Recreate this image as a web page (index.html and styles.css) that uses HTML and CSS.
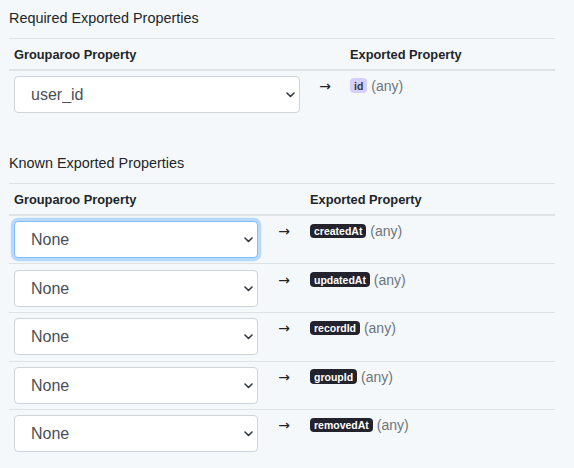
FILE: index.html
```html
<!DOCTYPE html>
<html lang="en">
<head>
<meta charset="utf-8">
<title>Exported Properties</title>
<link rel="stylesheet" href="styles.css">
</head>
<body>
<div class="page">
  <section class="block">
    <h2 class="block-title">Required Exported Properties</h2>
    <table class="map-table">
      <colgroup>
        <col class="col-select-wide">
        <col class="col-arrow-a">
        <col>
      </colgroup>
      <thead>
        <tr><th>Grouparoo Property</th><th></th><th>Exported Property</th></tr>
      </thead>
      <tbody>
        <tr>
          <td>
            <div class="select-wrap">
              <select class="select"><option>user_id</option></select>
              <svg class="chevron" width="9" height="6" viewBox="0 0 9 6"><path d="M1 1l3.5 3.5L8 1" fill="none" stroke="#343a40" stroke-width="1.6" stroke-linecap="round" stroke-linejoin="round"/></svg>
            </div>
          </td>
          <td class="arrow">→</td>
          <td class="prop"><span class="badge badge-light">id</span> <span class="type">(any)</span></td>
        </tr>
      </tbody>
    </table>
  </section>

  <section class="block">
    <h2 class="block-title">Known Exported Properties</h2>
    <table class="map-table">
      <colgroup>
        <col class="col-select-narrow">
        <col class="col-arrow-b">
        <col>
      </colgroup>
      <thead>
        <tr><th>Grouparoo Property</th><th></th><th>Exported Property</th></tr>
      </thead>
      <tbody>
        <tr>
          <td>
            <div class="select-wrap">
              <select class="select is-focused"><option>None</option></select>
              <svg class="chevron" width="9" height="6" viewBox="0 0 9 6"><path d="M1 1l3.5 3.5L8 1" fill="none" stroke="#343a40" stroke-width="1.6" stroke-linecap="round" stroke-linejoin="round"/></svg>
            </div>
          </td>
          <td class="arrow">→</td>
          <td class="prop"><span class="badge badge-dark">createdAt</span> <span class="type">(any)</span></td>
        </tr>
        <tr>
          <td>
            <div class="select-wrap">
              <select class="select"><option>None</option></select>
              <svg class="chevron" width="9" height="6" viewBox="0 0 9 6"><path d="M1 1l3.5 3.5L8 1" fill="none" stroke="#343a40" stroke-width="1.6" stroke-linecap="round" stroke-linejoin="round"/></svg>
            </div>
          </td>
          <td class="arrow">→</td>
          <td class="prop"><span class="badge badge-dark">updatedAt</span> <span class="type">(any)</span></td>
        </tr>
        <tr>
          <td>
            <div class="select-wrap">
              <select class="select"><option>None</option></select>
              <svg class="chevron" width="9" height="6" viewBox="0 0 9 6"><path d="M1 1l3.5 3.5L8 1" fill="none" stroke="#343a40" stroke-width="1.6" stroke-linecap="round" stroke-linejoin="round"/></svg>
            </div>
          </td>
          <td class="arrow">→</td>
          <td class="prop"><span class="badge badge-dark">recordId</span> <span class="type">(any)</span></td>
        </tr>
        <tr>
          <td>
            <div class="select-wrap">
              <select class="select"><option>None</option></select>
              <svg class="chevron" width="9" height="6" viewBox="0 0 9 6"><path d="M1 1l3.5 3.5L8 1" fill="none" stroke="#343a40" stroke-width="1.6" stroke-linecap="round" stroke-linejoin="round"/></svg>
            </div>
          </td>
          <td class="arrow">→</td>
          <td class="prop"><span class="badge badge-dark">groupId</span> <span class="type">(any)</span></td>
        </tr>
        <tr>
          <td>
            <div class="select-wrap">
              <select class="select"><option>None</option></select>
              <svg class="chevron" width="9" height="6" viewBox="0 0 9 6"><path d="M1 1l3.5 3.5L8 1" fill="none" stroke="#343a40" stroke-width="1.6" stroke-linecap="round" stroke-linejoin="round"/></svg>
            </div>
          </td>
          <td class="arrow">→</td>
          <td class="prop"><span class="badge badge-dark">removedAt</span> <span class="type">(any)</span></td>
        </tr>
      </tbody>
    </table>
  </section>
</div>
</body>
</html>
```

FILE: styles.css
```css
* { box-sizing: border-box; }

html, body {
  margin: 0;
  background: #f5f8fa;
  color: #212529;
  font-family: "Liberation Sans", Arial, sans-serif;
}

.page {
  width: 574px;
  padding: 8px 19px 0 9px;
}

.block + .block {
  margin-top: 35px;
}

.block-title {
  margin: 0 0 8px 0;
  font-size: 14.4px;
  line-height: 21.6px;
  font-weight: 400;
}

.map-table {
  width: 100%;
  table-layout: fixed;
  border-collapse: collapse;
}

.col-select-wide { width: 296px; }
.col-select-narrow { width: 254px; }
.col-arrow-a { width: 40px; }
.col-arrow-b { width: 42px; }

.map-table th {
  text-align: left;
  font-size: 12.8px;
  font-weight: 700;
  line-height: 19px;
  padding: 6px 5px 5px 5px;
  border-top: 1px solid #dee2e6;
  border-bottom: 2px solid #dee2e6;
  vertical-align: bottom;
}

.map-table td {
  padding: 5.3px 5px;
  border-top: 1px solid #dee2e6;
  vertical-align: top;
  font-size: 14px;
  line-height: 21px;
}

.map-table thead + tbody tr:first-child td {
  border-top: 0;
}

.select-wrap {
  position: relative;
}

.select {
  display: block;
  width: 100%;
  height: 37px;
  margin: 0;
  padding: 0 28px 0 16px;
  font-family: "Liberation Sans", Arial, sans-serif;
  font-size: 16px;
  color: #495057;
  background: #fff;
  border: 1px solid #ced4da;
  border-radius: 4px;
  -webkit-appearance: none;
  appearance: none;
  outline: none;
}

.select.is-focused {
  border-color: #80bdff;
  box-shadow: 0 0 0 3.2px rgba(0, 123, 255, 0.25);
}

.chevron {
  position: absolute;
  right: 5px;
  top: 16px;
  pointer-events: none;
}

.arrow {
  text-align: center;
  color: #212529;
  font-family: "DejaVu Sans", sans-serif;
  font-size: 14px;
}

.prop {
  white-space: nowrap;
}

.badge {
  display: inline-block;
  font-size: 10.5px;
  font-weight: 700;
  line-height: 10px;
  padding: 2.5px 4px 2px;
  border-radius: 4px;
  vertical-align: 1px;
}

.badge-light {
  background: #d4d0fb;
  color: #343a40;
}

.badge-dark {
  background: #22232c;
  color: #fff;
}

.type {
  color: #6c757d;
}
```
